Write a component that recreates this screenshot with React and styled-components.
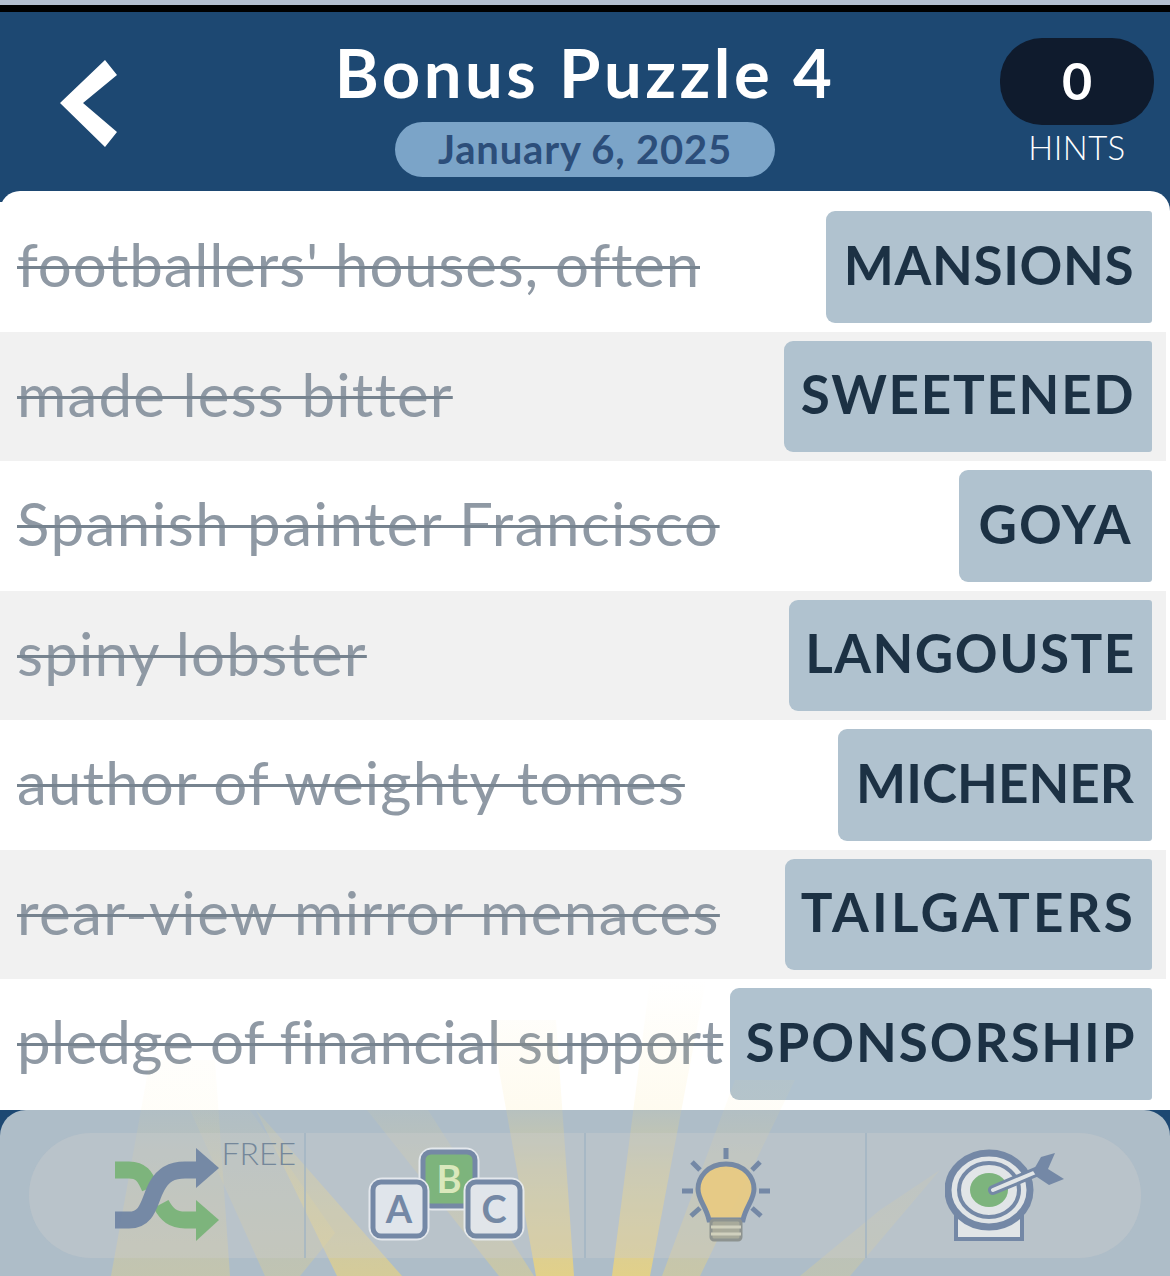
import styled, { createGlobalStyle } from 'styled-components';

const GlobalStyle = createGlobalStyle`
  html, body {
    margin: 0;
    padding: 0;
    background: #fff;
  }
  body {
    font-family: "Lato", "Noto Sans", sans-serif;
  }
`;

const Screen = styled.div`
  position: relative;
  width: 1170px;
  height: 1276px;
  overflow: hidden;
  background: #1d4872;
  display: flex;
  flex-direction: column;
`;

const StatusEdge = styled.div`
  height: 12px;
  flex: none;
  box-sizing: border-box;
  background: #000;
  border-top: 5px solid #b4bfcf;
`;

const Header = styled.header`
  flex: none;
  height: 179px;
  display: grid;
  grid-template-columns: 1fr auto 1fr;
  padding: 0 16px 0 60px;
`;

const BackButton = styled.button`
  border: 0;
  background: none;
  padding: 0;
  margin-top: 48px;
  width: 58px;
  height: 87px;
  justify-self: start;
`;

const TitleBlock = styled.div`
  display: flex;
  flex-direction: column;
  align-items: center;
  margin-left: -44px;
`;

const Title = styled.h1`
  margin: 22px 0 0;
  font-size: 67px;
  line-height: 76px;
  font-weight: 700;
  color: #fff;
  letter-spacing: 3.5px;
  white-space: nowrap;
`;

const DatePill = styled.div`
  margin-top: 12px;
  width: 380px;
  height: 55px;
  border-radius: 28px;
  background: #7ba4c8;
  color: #2c4e7a;
  font-size: 40px;
  line-height: 55px;
  font-weight: 700;
  letter-spacing: 0.8px;
  text-align: center;
`;

const HintBlock = styled.div`
  justify-self: end;
  display: flex;
  flex-direction: column;
  align-items: center;
  padding-top: 26px;
`;

const HintCount = styled.div`
  width: 154px;
  height: 87px;
  border-radius: 42px;
  background: #0f1b2d;
  color: #fff;
  font-size: 52px;
  font-weight: 700;
  line-height: 85px;
  text-align: center;
`;

const HintLabel = styled.div`
  margin-top: 3px;
  color: #fff;
  font-size: 33px;
  line-height: 38px;
  font-weight: 300;
  letter-spacing: 0.5px;
`;

const ClueList = styled.main`
  flex: none;
  height: 919px;
  box-sizing: border-box;
  padding: 11px 4px 0 0;
  background: #fff;
  border-radius: 20px 20px 0 0;
`;

const Row = styled.div`
  height: 129.5px;
  display: flex;
  align-items: center;
  justify-content: space-between;
  padding: 0 14px 0 17px;
  box-sizing: border-box;
  background: ${({ $shaded }) => ($shaded ? '#f1f1f1' : '#fff')};
`;

const Clue = styled.span`
  margin-top: -5px;
  font-size: 60px;
  font-weight: 400;
  color: #8f99a4;
  white-space: nowrap;
  letter-spacing: ${({ $spacing }) => $spacing}px;
  text-decoration: line-through;
  text-decoration-thickness: 3px;
  text-decoration-color: #76838f;
`;

const AnswerTile = styled.div`
  width: ${({ $width }) => $width}px;
  height: 111.5px;
  box-sizing: border-box;
  padding-bottom: 5px;
  flex: none;
  display: flex;
  align-items: center;
  justify-content: center;
  background: #b0c2cf;
  border-radius: 9px 3px 3px 9px;
  color: #1c3144;
  font-size: 53px;
  font-weight: 700;
  letter-spacing: ${({ $spacing }) => $spacing}px;
  white-space: nowrap;
`;

const Rays = styled.svg`
  position: absolute;
  left: 0;
  top: 960px;
  z-index: 1;
  pointer-events: none;
`;

const Toolbar = styled.nav`
  flex: none;
  height: 166px;
  box-sizing: border-box;
  padding: 23px 29px 0;
  background: #aebdc8;
  border-radius: 26px 26px 0 0;
`;

const ToolGroup = styled.div`
  position: relative;
  z-index: 2;
  height: 125px;
  display: grid;
  grid-template-columns: 275px 280px 281px 275px;
  border-radius: 62px;
  background: rgba(205, 205, 205, 0.36);
`;

const ToolCell = styled.div`
  position: relative;
  display: flex;
  align-items: center;
  justify-content: center;
  box-sizing: border-box;
  border-left: ${({ $first }) => ($first ? '0' : '2px solid rgba(160, 180, 195, 0.7)')};

  svg {
    opacity: 0.92;
  }
`;

const FreeTag = styled.span`
  position: absolute;
  top: 5px;
  right: 8px;
  font-size: 32px;
  line-height: 30px;
  font-weight: 300;
  color: #74879a;
`;

const BLUE = '#6f84a3';
const GREEN = '#78b377';

const BackIcon = () => (
  <svg width="58" height="87" viewBox="0 0 58 87">
    <polygon points="45,0 57,15 23,43 57,72 45,87 0,43" fill="#fff" />
  </svg>
);

const ShuffleIcon = () => (
  <svg width="104" height="94" viewBox="0 0 104 94" style={{ marginTop: -2 }}>
    <path d="M0 22 H14 C26 22 30 28 35 40" fill="none" stroke={GREEN} strokeWidth="17" />
    <path d="M46 56 C52 67 58 72 70 72 H84" fill="none" stroke={GREEN} strokeWidth="17" />
    <polygon points="81,52 104,72 81,93" fill={GREEN} />
    <path d="M0 72 H14 C34 72 34 52 42 38 C48 27 56 22 70 22 H84" fill="none" stroke={BLUE} strokeWidth="17" />
    <polygon points="81,0 104,20 81,40" fill={BLUE} />
  </svg>
);

const Block = ({ x, y, letter, fill, ink }) => (
  <g>
    <rect x={x} y={y} width="52" height="54" rx="9" fill="#e4e8ee" stroke="#e8ecf0" strokeWidth="9" />
    <rect x={x} y={y} width="52" height="54" rx="8" fill={fill} stroke={BLUE} strokeWidth="5" />
    <text x={x + 26} y={y + 41} textAnchor="middle" fontSize="38" fontFamily="Lato, sans-serif" fontWeight="700" fill={ink}>
      {letter}
    </text>
  </g>
);

const BlocksIcon = () => (
  <svg width="162" height="98" viewBox="0 0 162 98" style={{ marginTop: 1 }}>
    <Block x={59} y={5} letter="B" fill={GREEN} ink="#dcebbc" />
    <Block x={104} y={35} letter="C" fill="#e4e8ee" ink={BLUE} />
    <Block x={9} y={35} letter="A" fill="#e4e8ee" ink={BLUE} />
  </svg>
);

const BulbIcon = () => (
  <svg width="88" height="94" viewBox="0 0 88 94" style={{ marginTop: -1 }}>
    <path
      d="M44 16 C25 16 16 30 16 41 C16 52 24 58 27 72 H61 C64 58 72 52 72 41 C72 30 63 16 44 16 Z"
      fill="#e9cb82"
      stroke={BLUE}
      strokeWidth="5"
    />
    <rect x="29" y="72" width="30" height="20" rx="3" fill="#a7a898" stroke="#8a8f8c" strokeWidth="3" />
    <path d="M29 79 H59 M29 86 H59" stroke="#d3d2bd" strokeWidth="3" />
    <path
      d="M44 0 V11 M10 14 L18 22 M78 14 L70 22 M0 43 H11 M77 43 H88 M9 68 L18 60 M79 68 L70 60"
      stroke={BLUE}
      strokeWidth="5"
      fill="none"
    />
  </svg>
);

const TargetIcon = () => (
  <svg width="120" height="92" viewBox="0 0 120 92" style={{ marginTop: -2, marginLeft: 2 }}>
    <path d="M11 62 H77 V90 H11 Z" fill="#e5e8ea" stroke={BLUE} strokeWidth="4" />
    <ellipse cx="44" cy="41" rx="41" ry="37" fill="#e5e8ea" stroke={BLUE} strokeWidth="7" />
    <ellipse cx="44" cy="41" rx="30" ry="27" fill="none" stroke={BLUE} strokeWidth="4" />
    <ellipse cx="44" cy="41" rx="19" ry="17" fill={GREEN} />
    <path d="M48 41 L98 20" stroke={BLUE} strokeWidth="10" strokeLinecap="round" />
    <path d="M48 41 L98 20" stroke="#e5e8ea" strokeWidth="4" strokeLinecap="round" />
    <polygon points="88,22 96,8 110,4 103,20 119,30 104,36 92,28" fill={BLUE} />
  </svg>
);

const clues = [
  { clue: "footballers' houses, often", answer: 'MANSIONS', width: 326, clueSpacing: 0.8, spacing: 0.65 },
  { clue: 'made less bitter', answer: 'SWEETENED', width: 368, clueSpacing: 1.15, spacing: 1.7 },
  { clue: 'Spanish painter Francisco', answer: 'GOYA', width: 193, clueSpacing: 1.5, spacing: 1.9 },
  { clue: 'spiny lobster', answer: 'LANGOUSTE', width: 363, clueSpacing: 1.2, spacing: 1.5 },
  { clue: 'author of weighty tomes', answer: 'MICHENER', width: 314, clueSpacing: 1.15, spacing: 0.05 },
  { clue: 'rear-view mirror menaces', answer: 'TAILGATERS', width: 367, clueSpacing: 1.4, spacing: 3.2 },
  { clue: 'pledge of financial support', answer: 'SPONSORSHIP', width: 422, clueSpacing: 0.3, spacing: 1.9 },
];

// fan of light behind the toolbar: [points, strength]
const rayShapes = [
  ['150,100 215,100 230,316 111,316', 0.4],
  ['190,150 250,150 335,273 300,316 265,316', 0.35],
  ['256,150 306,207 402,316 337,316', 0.75],
  ['367,150 428,150 534,316 499,316', 0.5],
  ['490,60 556,60 574,316 536,316', 1],
  ['650,20 706,20 650,316 612,316', 1],
  ['735,120 795,120 700,316 662,316', 0.5],
  ['880,250 940,210 850,316 800,316', 0.3],
];

const App = () => (
  <Screen>
    <GlobalStyle />
    <StatusEdge />
    <Header>
      <BackButton aria-label="Back">
        <BackIcon />
      </BackButton>
      <TitleBlock>
        <Title>Bonus Puzzle 4</Title>
        <DatePill>January 6, 2025</DatePill>
      </TitleBlock>
      <HintBlock>
        <HintCount>0</HintCount>
        <HintLabel>HINTS</HintLabel>
      </HintBlock>
    </Header>
    <ClueList>
      {clues.map((item, i) => (
        <Row key={item.answer} $shaded={i % 2 === 1}>
          <Clue $spacing={item.clueSpacing}>{item.clue}</Clue>
          <AnswerTile $width={item.width} $spacing={item.spacing}>{item.answer}</AnswerTile>
        </Row>
      ))}
    </ClueList>
    <Rays width="1170" height="316" viewBox="0 0 1170 316">
      <defs>
        <linearGradient id="rayFade" gradientUnits="userSpaceOnUse" x1="0" y1="20" x2="0" y2="316">
          <stop offset="0" stopColor="#f7dc7a" stopOpacity="0" />
          <stop offset="0.44" stopColor="#f7dc7a" stopOpacity="0.12" />
          <stop offset="0.65" stopColor="#f5da78" stopOpacity="0.42" />
          <stop offset="1" stopColor="#f2d676" stopOpacity="0.76" />
        </linearGradient>
      </defs>
      {rayShapes.map(([points, strength]) => (
        <polygon key={points} points={points} fill="url(#rayFade)" fillOpacity={strength} />
      ))}
    </Rays>
    <Toolbar>
      <ToolGroup>
        <ToolCell $first>
          <ShuffleIcon />
          <FreeTag>FREE</FreeTag>
        </ToolCell>
        <ToolCell>
          <BlocksIcon />
        </ToolCell>
        <ToolCell>
          <BulbIcon />
        </ToolCell>
        <ToolCell>
          <TargetIcon />
        </ToolCell>
      </ToolGroup>
    </Toolbar>
  </Screen>
);

export default App;
